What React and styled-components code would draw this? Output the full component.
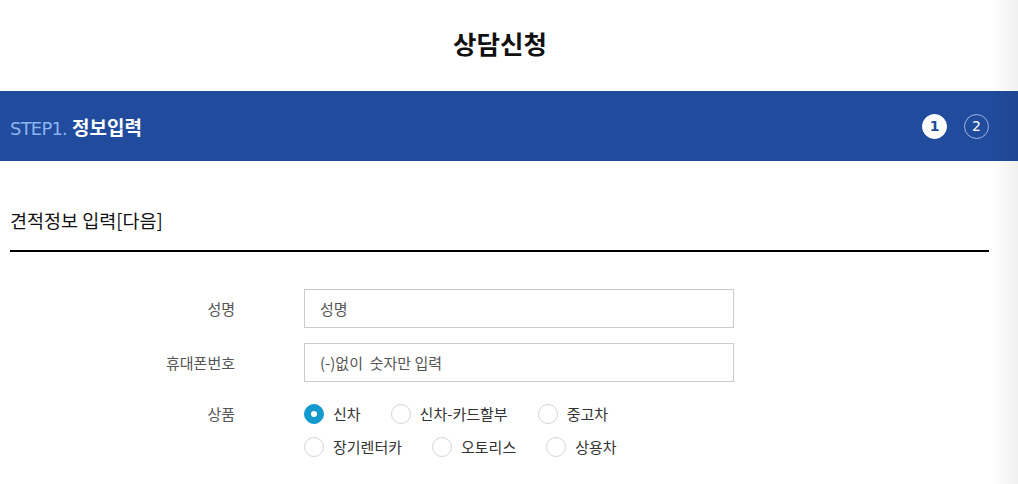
import styled, { createGlobalStyle } from "styled-components";
import { useState } from "react";

const GlobalStyle = createGlobalStyle`
  html, body {
    margin: 0;
    padding: 0;
    background: #fff;
  }
  body {
    font-family: "Noto Sans CJK KR", "Noto Sans", sans-serif;
    color: #222;
  }
`;

const Page = styled.div`
  width: 1000px;
`;

const EdgeShade = styled.div`
  position: fixed;
  top: 0;
  right: 0;
  width: 26px;
  height: 100%;
  pointer-events: none;
  background: linear-gradient(to right, rgba(0, 0, 0, 0), rgba(0, 0, 0, 0.06));
`;

const Header = styled.header`
  height: 91px;
  display: flex;
  align-items: center;
  justify-content: center;
  padding-bottom: 7px;
  box-sizing: border-box;
`;

const Title = styled.h1`
  margin: 0;
  font-size: 25.5px;
  font-weight: 700;
  color: #111;
`;

const StepBar = styled.div`
  height: 70px;
  width: 1018px;
  background: #214b9c;
  display: flex;
  align-items: center;
  justify-content: space-between;
  padding: 0 29px 0 10px;
  box-sizing: border-box;
`;

const StepTitle = styled.div`
  font-size: 19px;
  color: #fff;
  font-weight: 700;
  display: flex;
  align-items: baseline;
  gap: 5px;
`;

const StepNo = styled.span`
  font-family: "DejaVu Sans", sans-serif;
  font-weight: 400;
  font-size: 18px;
  color: #8db5f2;
  letter-spacing: -0.8px;
`;

const Dots = styled.div`
  display: flex;
  gap: 17px;
`;

const Dot = styled.span`
  width: 25px;
  height: 25px;
  border-radius: 50%;
  box-sizing: border-box;
  display: flex;
  align-items: center;
  justify-content: center;
  font-family: "DejaVu Sans", sans-serif;
  font-size: 14px;
  font-weight: ${(p) => (p.$active ? 700 : 400)};
  background: ${(p) => (p.$active ? "#fff" : "transparent")};
  color: ${(p) => (p.$active ? "#214b9c" : "#fff")};
  border: 1px solid ${(p) => (p.$active ? "#fff" : "#9bb5e6")};
`;

const Section = styled.section`
  padding: 0 11px 0 10px;
`;

const SectionHead = styled.h2`
  margin: 47px 0 0;
  padding-bottom: 18px;
  border-bottom: 2px solid #000;
  font-size: 18.5px;
  line-height: 24px;
  font-weight: 400;
  color: #111;
`;

const Form = styled.div`
  margin-top: 37px;
  display: grid;
  grid-template-columns: 225px 430px;
  column-gap: 69px;
  row-gap: 15px;
  align-items: center;
`;

const Label = styled.div`
  text-align: right;
  font-size: 15px;
  color: #555;
  align-self: ${(p) => (p.$top ? "start" : "center")};
  line-height: ${(p) => (p.$top ? "33px" : "normal")};
`;

const Input = styled.input`
  height: 39px;
  width: 430px;
  box-sizing: border-box;
  border: 1px solid #ccc;
  padding: 0 15px;
  font-family: inherit;
  font-size: 15px;
  color: #555;
  outline: none;
  &::placeholder {
    color: #555;
  }
`;

const Options = styled.div`
  display: flex;
  flex-wrap: wrap;
  column-gap: 30px;
  max-width: 340px;
`;

const Option = styled.label`
  display: flex;
  align-items: center;
  gap: 9px;
  height: 33px;
  font-size: 15px;
  color: #333;
  cursor: pointer;
`;

const RadioMark = styled.span`
  width: 20px;
  height: 20px;
  border-radius: 50%;
  box-sizing: border-box;
  display: flex;
  align-items: center;
  justify-content: center;
  border: 1px solid ${(p) => (p.$on ? "#1499cc" : "#d4d4d4")};
  background: ${(p) => (p.$on ? "#1499cc" : "#fff")};
  &::after {
    content: "";
    width: 6px;
    height: 6px;
    border-radius: 50%;
    background: #fff;
    display: ${(p) => (p.$on ? "block" : "none")};
  }
`;

const products = ["신차", "신차-카드할부", "중고차", "장기렌터카", "오토리스", "상용차"];

export default function App() {
  const [product, setProduct] = useState("신차");

  return (
    <Page>
      <GlobalStyle />
      <Header>
        <Title>상담신청</Title>
      </Header>
      <StepBar>
        <StepTitle>
          <StepNo>STEP1.</StepNo>
          정보입력
        </StepTitle>
        <Dots>
          <Dot $active>1</Dot>
          <Dot>2</Dot>
        </Dots>
      </StepBar>
      <Section>
        <SectionHead>견적정보 입력[다음]</SectionHead>
        <Form>
          <Label>성명</Label>
          <Input placeholder="성명" />
          <Label>휴대폰번호</Label>
          <Input placeholder={"(-)없이\u00a0\u00a0숫자만 입력"} />
          <Label $top>상품</Label>
          <Options>
            {products.map((p) => (
              <Option key={p} onClick={() => setProduct(p)}>
                <RadioMark $on={product === p} />
                {p}
              </Option>
            ))}
          </Options>
        </Form>
      </Section>
      <EdgeShade />
    </Page>
  );
}
